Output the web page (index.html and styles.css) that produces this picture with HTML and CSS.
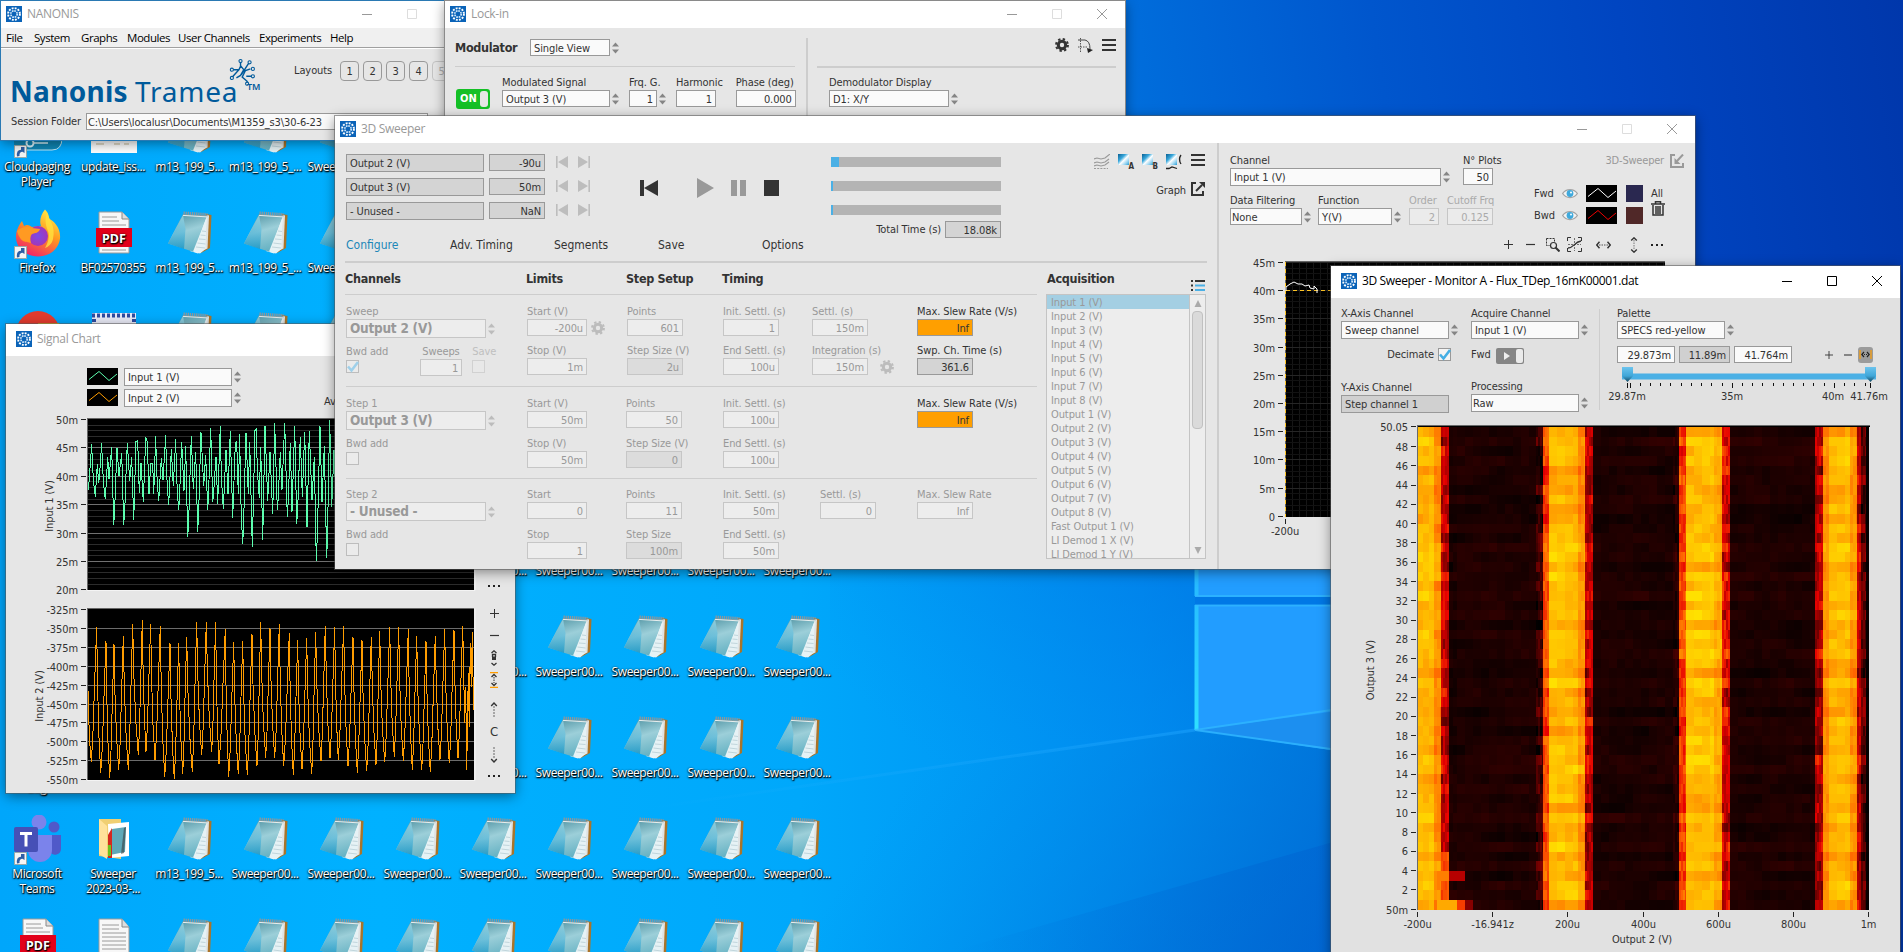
FILE: index.html
```html
<!DOCTYPE html>
<html lang="en">
<head>
<meta charset="utf-8">
<title>Nanonis desktop</title>
<link rel="stylesheet" href="styles.css">
</head>
<body>
<svg class="defs" aria-hidden="true">
  <defs>
    <linearGradient id="gPage" x1=".3" y1="0" x2=".6" y2="1"><stop offset="0" stop-color="#5597a6"/><stop offset=".45" stop-color="#9ccfd9"/><stop offset="1" stop-color="#62b0c2"/></linearGradient>
    <linearGradient id="gPageL" x1="0" y1="0" x2="0" y2="1"><stop offset="0" stop-color="#a5e0ee"/><stop offset="1" stop-color="#0d92c6"/></linearGradient>
    <linearGradient id="gFox" x1=".8" y1="0" x2=".3" y2="1"><stop offset="0" stop-color="#fff14a"/><stop offset=".45" stop-color="#ff9a1f"/><stop offset="1" stop-color="#f0206a"/></linearGradient>
    <radialGradient id="gGlobe"><stop offset="0" stop-color="#7a4be8"/><stop offset="1" stop-color="#a336b8"/></radialGradient>
    <linearGradient id="gMap" x1="0" y1="0" x2="1" y2="1"><stop offset="0" stop-color="#0a5f92"/><stop offset=".35" stop-color="#38a8dc"/><stop offset=".55" stop-color="#fff"/><stop offset=".8" stop-color="#8fd0ef"/><stop offset="1" stop-color="#2a9cd6"/></linearGradient>
    <linearGradient id="gKnob" x1="0" y1="0" x2="0" y2="1"><stop offset="0" stop-color="#6cc4ee"/><stop offset=".6" stop-color="#3fa6d8"/><stop offset="1" stop-color="#16485f"/></linearGradient>
  </defs>
  <symbol id="app" viewBox="0 0 16 16"><rect width="16" height="16" fill="#0a63b8"/><circle cx="8" cy="8" r="5.9" fill="none" stroke="#fff" stroke-width="1.9" stroke-dasharray="1.9 1.19"/><circle cx="8" cy="8" r="3.2" fill="none" stroke="#cfe6fa" stroke-width="1.7" stroke-dasharray="1.7 .8"/></symbol>
  <symbol id="min" viewBox="0 0 10 10"><path d="M0 5.5h10" stroke="currentColor"/></symbol>
  <symbol id="max" viewBox="0 0 10 10"><path d="M.5.5h9v9h-9z" fill="none" stroke="currentColor"/></symbol>
  <symbol id="close" viewBox="0 0 10 10"><path d="M0 0l10 10M10 0L0 10" stroke="currentColor" fill="none"/></symbol>
  <symbol id="ud" viewBox="0 0 7 12"><path d="M0 4.6L3.5.4 7 4.6zM0 7.4L3.500 11.600 7 7.400z" fill="currentColor"/></symbol>
  <symbol id="gear" viewBox="0 0 14 14"><circle cx="7" cy="7" r="3.7" fill="none" stroke="currentColor" stroke-width="3"/><circle cx="7" cy="7" r="5.9" fill="none" stroke="currentColor" stroke-width="2.1" stroke-dasharray="2.35 2.283"/></symbol>
  <symbol id="burger" viewBox="0 0 14 14"><path d="M0 2h14M0 7h14M0 12h14" stroke="currentColor" stroke-width="2"/></symbol>
  <symbol id="skipb" viewBox="0 0 12 12"><path d="M0 0h1.600v12H0zM12 0v12L2 6z" fill="currentColor"/></symbol>
  <symbol id="skipf" viewBox="0 0 12 12"><path d="M12 0h-1.600v12H12zM0 0v12l10-6z" fill="currentColor"/></symbol>
  <symbol id="waves" viewBox="0 0 16 16"><path d="M0 5l3-1 4 1 4-1 5-4M0 9l3-1 4 1 4-1 4-3M0 12l3-1 4 1 4-1 4-3" fill="none" stroke="#9a9a9a" stroke-width="1.200"/><path d="M0 14.500h14" stroke="#9a9a9a" stroke-dasharray="2 1.200"/></symbol>
  <symbol id="mapicon" viewBox="0 0 11 11"><path d="M0 0h11v11H0z" fill="url(#gMap)"/></symbol>
  <symbol id="popout" viewBox="0 0 14 14"><path d="M5 1H1v12h11V9" fill="none" stroke="currentColor" stroke-width="2"/><path d="M5 9l6-6" stroke="currentColor" stroke-width="2"/><path d="M8 0h6v6z" fill="currentColor"/></symbol>
  <symbol id="popin" viewBox="0 0 14 14"><path d="M5 1H1v12h12V9" fill="none" stroke="currentColor" stroke-width="2"/><path d="M13 .5L7 7" stroke="currentColor" stroke-width="2"/><path d="M4.500 10V4l6 6z" fill="currentColor"/></symbol>
  <symbol id="listicon" viewBox="0 0 14 11"><path d="M0 1h2M0 5.500h2M0 10h2M4 1h10" stroke="#333" stroke-width="2"/><path d="M4 5.500h10M4 10h10" stroke="#4bb0e5" stroke-width="2"/></symbol>
  <symbol id="eye" viewBox="0 0 16 11"><path d="M.6 5.500C4 .2 12 .2 15.400 5.500 12 10.800 4 10.800.6 5.500z" fill="#f4f4f4" stroke="#a5a5a5" stroke-width="1.300"/><circle cx="8" cy="5.500" r="3.400" fill="#3fa9dc"/><circle cx="9" cy="4.500" r="1" fill="#fff"/></symbol>
  <symbol id="trash" viewBox="0 0 14 15"><path d="M0 3h14M4.500 2.500V.8h5v1.700M2 4v10h10V4M5 5v8M7 5v8M9 5v8" fill="none" stroke="#333" stroke-width="1.500"/></symbol>
  <symbol id="zoomsel" viewBox="0 0 14 14"><path d="M.5.5h8v3M.5.500v7h3" fill="none" stroke="#333" stroke-dasharray="2 1"/><circle cx="7.500" cy="7.500" r="3" fill="none" stroke="#333" stroke-width="1.200"/><path d="M9.500 9.500L13.500 13.500" stroke="#333" stroke-width="2"/></symbol>
  <symbol id="fit" viewBox="0 0 15 15"><path d="M.5 4V.5H4M11 .5h3.500V4M.5 11v3.500H4M11 14.500h3.500V11" fill="none" stroke="#333"/><path d="M7.500 1v13M1 7.500h13" stroke="#555" stroke-width=".8" stroke-dasharray="2 1"/><path d="M1 11c6 0 6-6 13-7" fill="none" stroke="#333" stroke-width="1.300"/></symbol>
  <symbol id="harr" viewBox="0 0 15 8"><path d="M3.500.8L.8 4l2.700 3.200M11.500.8L14.200 4l-2.700 3.200" fill="none" stroke="#333" stroke-width="1.400"/><path d="M3 4h9" stroke="#555" stroke-dasharray="1.500 1"/></symbol>
  <symbol id="varr" viewBox="0 0 8 16"><path d="M1.200 3.500L4 .8l2.800 2.700M1.200 12.500L4 15.200l2.800-2.700" fill="none" stroke="#333" stroke-width="1.400"/><path d="M4 3v10" stroke="#777" stroke-dasharray="1.500 1"/></symbol>
  <symbol id="plus" viewBox="0 0 9 9"><path d="M0 4.500h9M4.500 0v9" stroke="#333"/></symbol>
  <symbol id="minus" viewBox="0 0 9 9"><path d="M0 4.500h9" stroke="#333" stroke-width="1.200"/></symbol>
  <symbol id="dots" viewBox="0 0 12 2"><path d="M0 1h2M5 1h2M10 1h2" stroke="#222" stroke-width="2"/></symbol>
  <symbol id="tracepic" viewBox="0 0 31 17"><path d="M0 0h31v17H0z" fill="#000"/><path d="M2 11.500L12 3.500l10 9 8-6.500" fill="none" stroke="currentColor"/></symbol>
  <symbol id="tick" viewBox="0 0 13 13"><path d="M2 6.500l3.500 4L12 2" fill="none" stroke="currentColor" stroke-width="2.600"/></symbol>
  <symbol id="vup" viewBox="0 0 8 16"><path d="M1.200 4L4 1l2.800 3" fill="none" stroke="#333" stroke-width="1.400"/><path d="M4 4v12" stroke="#666" stroke-dasharray="2 1"/></symbol>
  <symbol id="vdown" viewBox="0 0 8 16"><path d="M1.200 12L4 15l2.800-3" fill="none" stroke="#333" stroke-width="1.400"/><path d="M4 0v12" stroke="#666" stroke-dasharray="2 1"/></symbol>
  <symbol id="vlock" viewBox="0 0 8 16"><path d="M1.500 3L4 .8 6.500 3M1.500 13L4 15.200 6.500 13M2.500 7V4.500h3V7" fill="none" stroke="#333" stroke-width="1.300"/><path d="M2 6.500h4v3.500H2z" fill="#333"/></symbol>
  <symbol id="vfit" viewBox="0 0 8 16"><path d="M0 .6h8M0 15.400h8" stroke="#ff9d00" stroke-width="1.300"/><path d="M1.500 5L4 2.500 6.500 5M1.500 11L4 13.500 6.500 11" fill="none" stroke="#333" stroke-width="1.300"/><path d="M4 5v6" stroke="#333" stroke-dasharray="1.500 1"/></symbol>

  <symbol id="notepad" viewBox="0 0 48 48">
    <path d="M40 5l5.500 1-1.500 33-9 5z" fill="#a9742a"/>
    <path d="M41 6l2 .5-1.500 33-9.500 4z" fill="#dfe3e4"/>
    <path d="M41 6L24 42l8 2.500 6-4z" fill="#eef6f8"/>
    <path d="M17 5l24 1.500L28 43 2 34.500z" fill="url(#gPage)"/>
    <path d="M17 6L2 34.500l16 5.500 1.500-20z" fill="url(#gPageL)" opacity=".7"/>
    <path d="M40.500 9L27 42.500l7 2 5.500-4.500z" fill="#e6f2f5"/>
    <path d="M36 22l4 .5M34.500 26l5 .5M33 30l6.500 .5M31.500 34l8 1M30 38l9 1" stroke="#b6cdd4" stroke-width=".8"/>
    <path d="M17.500 4.200l24 1.500" stroke="#8f9799" stroke-width="3.400" stroke-dasharray="1.300 .8"/>
    <path d="M17 6.400l24 1.500" stroke="#e9eeee" stroke-width="1"/>
  </symbol>
  <symbol id="shortcut" viewBox="0 0 13 13"><path d="M.5.5h12v12H.5z" fill="#f5f5f5" stroke="#9aa"/><path d="M3 11.500Q2 5 7 4.800V2h3.500v6L8.500 6.800Q5 7 5.500 11z" fill="#2e5fa5"/></symbol>
  <symbol id="firefox" viewBox="0 0 48 48">
    <path d="M31 .5c3 3 4 6 4 9 5 3 12 9 11 20-1 10-10 18-22 18S2 39 2 28c0-7 3-12 6-16l2 5c3-2 5-1 8 1l9-1c-2-5 0-12 4-16.500z" fill="url(#gFox)"/>
    <circle cx="24" cy="27" r="10" fill="url(#gGlobe)"/>
    <path d="M3 22c4-4 10-5 15-3l8 1c-1 4-5 4-8 5-2 2-2 6-1 9-5-2-10 1-14-12z" fill="#ff9a22"/>
    <path d="M33 3c2 8 9 14 6 27-1 5-5 8-8 9 3-5 5-12 3-17-3-7-3-13-1-19z" fill="#ffe23e" opacity=".8"/>
  </symbol>
  <symbol id="pdf" viewBox="0 0 48 48">
    <path d="M9 3h23l7 7v34H9z" fill="#f7f7f7" stroke="#9a9a9a"/><path d="M32 3v7h7" fill="#ddd" stroke="#888"/>
    <path d="M12 8h15M12 12h17M12 16h24M12 41h24" stroke="#9a9a9a"/><path d="M6 19h36v19H6z" fill="#e2001a"/>
    <text x="24" y="33.500" class="pdftext">PDF</text>
  </symbol>
  <symbol id="doc" viewBox="0 0 48 48"><path d="M9 3h23l7 8v37H9z" fill="#f7f7f7" stroke="#9a9a9a"/><path d="M32 3v8h7" fill="#ddd" stroke="#888"/><path d="M12 9h17M12 13h17M12 17h24M12 21h24M12 25h24M12 29h24M12 33h24M12 37h24M12 41h24" stroke="#9a9a9a"/></symbol>
  <symbol id="teams" viewBox="0 0 48 48">
    <circle cx="40" cy="12" r="5.500" fill="#5059c9"/><circle cx="25" cy="7" r="7.500" fill="#7b83eb"/>
    <path d="M36 20h11v14a6 6 0 0 1-11 3z" fill="#5059c9"/><path d="M14 20h24v15a12 12 0 0 1-24 0z" fill="#7b83eb"/>
    <rect x="0" y="12" width="24" height="25" rx="2" fill="#4650b6"/><path d="M6 18.500h12M12 18.500v13" stroke="#fff" stroke-width="3"/>
  </symbol>
  <symbol id="folder" viewBox="0 0 48 48">
    <path d="M9 4l22 0v40l-22-3z" fill="#f0cf72"/><path d="M18 9l21-2v34l-20 2z" fill="#fff"/><path d="M22 14l14-2-1 25-15 3z" fill="#5fa9b8"/><path d="M34 13l2-1-2 26-3 1z" fill="#333" opacity=".55"/><path d="M18 20l4-7v30h-4z" fill="#d5281e"/><path d="M18 30h3v11h-3z" fill="#6cc21e"/>
    <path d="M9 4l8 7v33l-8-5z" fill="#ffe29a"/>
  </symbol>
  <symbol id="chrome" viewBox="0 0 48 48"><circle cx="24" cy="23" r="22" fill="#e33b2e"/><circle cx="24" cy="24" r="9" fill="#fff"/><path d="M24 13h21a22 22 0 0 1-20 32z" fill="#fbc116"/></symbol>
  <symbol id="cal" viewBox="0 0 48 48"><path d="M2 3h44v42H2z" fill="#e9eaf6"/><path d="M2 5.500h44" stroke="#2f4ba0" stroke-width="4" stroke-dasharray="3 2"/><path d="M4 9v36M44 9v36" stroke="#2f4ba0" stroke-width="4" stroke-dasharray="3 2"/></symbol>
  <symbol id="sheet" viewBox="0 0 48 48"><path d="M1 2h46v43H1z" fill="#fff"/><path d="M6 31h8M6 36h8M24 31h6M24 36h6M34 31h5M34 36h5" stroke="#ded9c8" stroke-width="2"/></symbol>
  <symbol id="cloud" viewBox="0 0 48 48"><path d="M-2 20h50v10q0 12-10 12H-2z" fill="#0f86b4" stroke="#bfe8f6"/><circle cx="16" cy="35" r="3.500" fill="none" stroke="#d8f2fb" stroke-width="2"/><path d="M20 35h14" stroke="#d8f2fb" stroke-width="1.500"/></symbol>
</svg>

<div class="desktop">
  <svg class="wallpaper" viewBox="0 0 1903 952" preserveAspectRatio="none">
    <defs>
      <linearGradient id="wBase" x1="0" y1="0" x2="1903" y2="0" gradientUnits="userSpaceOnUse">
        <stop offset="0" stop-color="#00a6fb"/><stop offset=".2" stop-color="#00b1ff"/><stop offset=".42" stop-color="#00a8fb"/><stop offset=".6" stop-color="#008df0"/><stop offset=".7" stop-color="#0078de"/><stop offset=".86" stop-color="#0048c4"/><stop offset="1" stop-color="#0039ae"/>
      </linearGradient>
      <linearGradient id="wTop" x1="1100" y1="120" x2="1903" y2="0" gradientUnits="userSpaceOnUse">
        <stop offset="0" stop-color="#0071de"/><stop offset=".35" stop-color="#0056cd"/><stop offset=".65" stop-color="#0045c1"/><stop offset="1" stop-color="#0037ab"/>
      </linearGradient>
      <linearGradient id="wFloor" x1="960" y1="700" x2="1360" y2="960" gradientUnits="userSpaceOnUse"><stop offset="0" stop-color="#0090e8" stop-opacity="0"/><stop offset="1" stop-color="#0068d4"/></linearGradient>
      <linearGradient id="wBeam" x1="650" y1="0" x2="1195" y2="0" gradientUnits="userSpaceOnUse"><stop offset="0" stop-color="#2bb4ff" stop-opacity="0"/><stop offset="1" stop-color="#1ea4ff" stop-opacity=".5"/></linearGradient>
      <linearGradient id="wRay" x1="960" y1="0" x2="1340" y2="0" gradientUnits="userSpaceOnUse"><stop offset="0" stop-color="#0060cf" stop-opacity="0"/><stop offset="1" stop-color="#0060cf" stop-opacity=".45"/></linearGradient>
      <linearGradient id="wShade" x1="950" y1="780" x2="1150" y2="560" gradientUnits="userSpaceOnUse"><stop offset="0" stop-color="#0090f0" stop-opacity="0"/><stop offset="1" stop-color="#007ce8" stop-opacity=".6"/></linearGradient>
      <linearGradient id="wEdge" x1="0" y1="560" x2="0" y2="730" gradientUnits="userSpaceOnUse"><stop offset="0" stop-color="#25b4ff"/><stop offset="1" stop-color="#2fe0ff"/></linearGradient>
    </defs>
    <path d="M0 0h1903v952H0z" fill="url(#wBase)"/>
    <path d="M1100 0h803v400h-803z" fill="url(#wTop)"/>
    <path d="M830 560h365v170L830 780z" fill="url(#wShade)"/>
    <path d="M700 800L1195 730 1340 752V952H700z" fill="url(#wFloor)"/>
    <path d="M950 952L1340 840v112z" fill="url(#wRay)"/>
    <path d="M650 808L1195 730" stroke="url(#wBeam)" stroke-width="3"/>
    <path d="M1195 540h150v57h-150zM1195 605h150v147L1195 730z" fill="#229dff"/>
    <path d="M1195 597h150v8h-150z" fill="#0078e6"/>
    <path d="M1195 730l150-20v42z" fill="#1c8ff0"/>
    <path d="M1196.500 540v56M1196.500 605v125" stroke="url(#wEdge)" stroke-width="4"/>
    <path d="M1195 596h150M1195 605.500h150M1195 730l150 21M1195 730l150-22" stroke="#2fb6ff" stroke-width="2" fill="none" opacity=".8"/>
  </svg>
  <div class="icons" id="icons"></div>

  <section class="win nanonis">
    <header class="bar"><svg class="i16"><use href="#app"/></svg><span class="title">NANONIS</span><svg class="wb b1"><use href="#min"/></svg><svg class="wb faint"><use href="#max"/></svg></header>
    <nav class="menu"><span>File</span><span>System</span><span>Graphs</span><span>Modules</span><span>User Channels</span><span>Experiments</span><span>Help</span></nav>
    <div class="nbody">
      <div class="nrow">
        <div class="logo"><b>Nanonis</b><span>Tramea</span>
          <svg class="branch" viewBox="0 0 32 34"><g fill="none" stroke="#005a9b" stroke-width="1.700"><path d="M13 2v6l4 5-4 7-5 3M23 5l-9 14M25 12l-6 2-4 8 6 5v5M27 21h-7M2 13h9l2-4M11 13l-9 10"/></g><g fill="#e6e6e6" stroke="#005a9b" stroke-width="1.300"><circle cx="13" cy="2.500" r="1.900"/><circle cx="24" cy="4" r="1.900"/><circle cx="28" cy="12" r="1.900"/><circle cx="28" cy="21" r="1.900"/><circle cx="21" cy="30" r="1.900"/><circle cx="2.500" cy="13" r="1.900"/><circle cx="2.500" cy="23" r="1.900"/></g></svg>
          <sup>TM</sup></div>
        <div class="layouts"><span>Layouts</span><i>1</i><i>2</i><i>3</i><i>4</i><i class="off">5</i></div>
      </div>
      <div class="session"><span>Session Folder</span><div class="box path">C:\Users\localusr\Documents\M1359_s3\30-6-23</div></div>
    </div>
  </section>

  <section class="win lockin">
    <header class="bar"><svg class="i16"><use href="#app"/></svg><span class="title">Lock-in</span><svg class="wb b1"><use href="#min"/></svg><svg class="wb faint"><use href="#max"/></svg><svg class="wb"><use href="#close"/></svg></header>
    <div class="lbody">
      <div class="lleft">
        <div class="lhead"><b class="h">Modulator</b><div class="sel"><div class="box w80">Single View</div><svg><use href="#ud"/></svg></div></div>
        <div class="lfields">
          <div class="toggle">ON<i></i></div>
          <div class="fld"><label>Modulated Signal</label><div class="sel"><div class="box w108">Output 3 (V)</div><svg><use href="#ud"/></svg></div></div>
          <div class="fld"><label>Frq. G.</label><div class="sel"><div class="box num w28">1</div><svg><use href="#ud"/></svg></div></div>
          <div class="fld"><label>Harmonic</label><div class="box num w40">1</div></div>
          <div class="fld"><label>Phase (deg)</label><div class="box num w60">0.000</div></div>
        </div>
      </div>
      <div class="lright">
        <div class="ltools"><svg class="i14"><use href="#gear"/></svg><svg class="i15" viewBox="0 0 15 15"><path d="M2.500 0v15M0 9h10" stroke="#555" stroke-dasharray="1.500 1" fill="none"/><path d="M0 2h7q5 1 5 9" stroke="#444" fill="none"/><path d="M9 10l6 2-5 3z" fill="#222"/></svg><svg class="i14"><use href="#burger"/></svg></div>
        <div class="fld demod"><label>Demodulator Display</label><div class="sel"><div class="box w120">D1: X/Y</div><svg><use href="#ud"/></svg></div></div>
      </div>
    </div>
  </section>

  <section class="win chartwin">
    <header class="bar tall"><svg class="i16"><use href="#app"/></svg><span class="title">Signal Chart</span></header>
    <div class="cbody">
      <div class="crow"><svg class="tr green"><use href="#tracepic"/></svg><div class="sel"><div class="box b18 w108">Input 1 (V)</div><svg><use href="#ud"/></svg></div></div>
      <div class="crow"><svg class="tr amber"><use href="#tracepic"/></svg><div class="sel"><div class="box b18 w108">Input 2 (V)</div><svg><use href="#ud"/></svg></div><span class="av">Average</span></div>
      <div class="cplots"><svg id="chart" width="476" height="383"></svg>
        <div class="vtools"><svg class="dots"><use href="#dots"/></svg><svg class="p9 t1"><use href="#plus"/></svg><svg class="p9 t2"><use href="#minus"/></svg><svg class="v8"><use href="#vlock"/></svg><svg class="v8"><use href="#vfit"/></svg><svg class="v8 t3"><use href="#vup"/></svg><b>C</b><svg class="v8"><use href="#vdown"/></svg><svg class="dots t4"><use href="#dots"/></svg></div>
      </div>
    </div>
  </section>

  <section class="win sweeper">
    <header class="bar"><svg class="i16"><use href="#app"/></svg><span class="title">3D Sweeper</span><svg class="wb b1"><use href="#min"/></svg><svg class="wb faint"><use href="#max"/></svg><svg class="wb"><use href="#close"/></svg></header>
    <div class="sbody">
      <div class="sleft">
        <div class="stop">
          <div class="status">
            <div><div class="box ro b18 w138">Output 2 (V)</div><div class="box ro num w56">-90u</div><svg><use href="#skipb"/></svg><svg><use href="#skipf"/></svg></div>
            <div><div class="box ro b18 w138">Output 3 (V)</div><div class="box ro num w56">50m</div><svg><use href="#skipb"/></svg><svg><use href="#skipf"/></svg></div>
            <div><div class="box ro b18 w138">- Unused -</div><div class="box ro num w56">NaN</div><svg><use href="#skipb"/></svg><svg><use href="#skipf"/></svg></div>
          </div>
          <svg class="transport" width="140" height="20" viewBox="0 0 140 20"><path d="M0 2h4v16H0zM18 2v16L4 10zM124 2h15v16h-15z" fill="#333"/><path d="M57 0l17 10-17 10zM91 2h6v16h-6zM100 2h6v16h-6z" fill="#999"/></svg>
          <div class="progress"><div><i class="p8"></i></div><div><i></i></div><div><i></i></div><p><span>Total Time (s)</span><span class="box ro num w56">18.08k</span></p></div>
          <div class="stools">
            <div><svg class="i16"><use href="#waves"/></svg><span class="mi"><svg><use href="#mapicon"/></svg><em>A</em></span><span class="mi"><svg><use href="#mapicon"/></svg><em>B</em></span><span class="mi"><svg><use href="#mapicon"/></svg><svg class="side" viewBox="0 0 16 16"><path d="M15 1q-3 4 0 9M0 14.500h3l3-1.500 5 1.500" fill="none" stroke="#222" stroke-width="1.300"/></svg></span><svg class="i14 bg"><use href="#burger"/></svg></div>
            <div class="graph"><span>Graph</span><svg class="i14"><use href="#popout"/></svg></div>
          </div>
        </div>
        <div class="tabs"><span class="on">Configure</span><span>Adv. Timing</span><span>Segments</span><span>Save</span><span>Options</span></div>
        <div class="cfg">
          <div class="params">
            <div class="g heads"><b class="h">Channels</b><b class="h">Limits</b><b class="h">Step Setup</b><b class="h">Timing</b></div>
            <div class="g first">
              <div class="fld"><label>Sweep</label><div class="sel"><div class="box big w140">Output 2 (V)</div><svg><use href="#ud"/></svg></div></div>
              <div class="fld"><label>Start (V)</label><div class="inl"><div class="box num w60">-200u</div><svg class="i14"><use href="#gear"/></svg></div></div>
              <div class="fld"><label>Points</label><div class="box num w56">601</div></div>
              <div class="fld"><label>Init. Settl. (s)</label><div class="box num w56">1</div></div>
              <div class="fld"><label>Settl. (s)</label><div class="box num w56">150m</div></div>
              <div class="fld live"><label>Max. Slew Rate (V/s)</label><div class="box num or w56">Inf</div></div>
            </div>
            <div class="g second a">
              <div class="bwd"><div class="fld"><label>Bwd add</label><div class="chk"><svg><use href="#tick"/></svg></div></div><div class="fld sw"><label>Sweeps</label><div class="box num w42">1</div></div><div class="fld sv"><label>Save</label><div class="chk"></div></div></div>
              <div class="fld"><label>Stop (V)</label><div class="box num w60">1m</div></div>
              <div class="fld"><label>Step Size (V)</label><div class="box num ro w56">2u</div></div>
              <div class="fld"><label>End Settl. (s)</label><div class="box num w56">100u</div></div>
              <div class="fld"><label>Integration (s)</label><div class="inl far"><div class="box num w56">150m</div><svg class="i14"><use href="#gear"/></svg></div></div>
              <div class="fld live"><label>Swp. Ch. Time (s)</label><div class="box num ro w56">361.6</div></div>
            </div>
            <div class="g first s">
              <div class="fld"><label>Step 1</label><div class="sel"><div class="box big w140">Output 3 (V)</div><svg><use href="#ud"/></svg></div></div>
              <div class="fld"><label>Start (V)</label><div class="box num w60">50m</div></div>
              <div class="fld"><label>Points</label><div class="box num w56">50</div></div>
              <div class="fld"><label>Init. Settl. (s)</label><div class="box num w56">100u</div></div>
              <div></div>
              <div class="fld live"><label>Max. Slew Rate (V/s)</label><div class="box num or w56">Inf</div></div>
            </div>
            <div class="g second s">
              <div class="fld"><label>Bwd add</label><div class="chk"></div></div>
              <div class="fld"><label>Stop (V)</label><div class="box num w60">50m</div></div>
              <div class="fld"><label>Step Size (V)</label><div class="box num ro w56">0</div></div>
              <div class="fld"><label>End Settl. (s)</label><div class="box num w56">100u</div></div>
            </div>
            <div class="g first s z">
              <div class="fld"><label>Step 2</label><div class="sel"><div class="box big w140">- Unused -</div><svg><use href="#ud"/></svg></div></div>
              <div class="fld"><label>Start</label><div class="box num w60">0</div></div>
              <div class="fld"><label>Points</label><div class="box num w56">11</div></div>
              <div class="fld"><label>Init. Settl. (s)</label><div class="box num w56">50m</div></div>
              <div class="fld ind"><label>Settl. (s)</label><div class="box num w56">0</div></div>
              <div class="fld"><label>Max. Slew Rate</label><div class="box num w56">Inf</div></div>
            </div>
            <div class="g second s z">
              <div class="fld"><label>Bwd add</label><div class="chk"></div></div>
              <div class="fld"><label>Stop</label><div class="box num w60">1</div></div>
              <div class="fld"><label>Step Size</label><div class="box num ro w56">100m</div></div>
              <div class="fld"><label>End Settl. (s)</label><div class="box num w56">50m</div></div>
            </div>
          </div>
          <div class="acq">
            <div class="acqh"><b class="h">Acquisition</b><svg><use href="#listicon"/></svg></div>
            <div class="list">
              <ul><li class="on">Input 1 (V)</li><li>Input 2 (V)</li><li>Input 3 (V)</li><li>Input 4 (V)</li><li>Input 5 (V)</li><li>Input 6 (V)</li><li>Input 7 (V)</li><li>Input 8 (V)</li><li>Output 1 (V)</li><li>Output 2 (V)</li><li>Output 3 (V)</li><li>Output 4 (V)</li><li>Output 5 (V)</li><li>Output 6 (V)</li><li>Output 7 (V)</li><li>Output 8 (V)</li><li>Fast Output 1 (V)</li><li>LI Demod 1 X (V)</li><li>LI Demod 1 Y (V)</li></ul>
              <div class="sb"><svg viewBox="0 0 8 8"><path d="M4 0l4 8H0z" fill="#aaa"/></svg><i></i><svg class="dn" viewBox="0 0 8 8"><path d="M4 8l4-8H0z" fill="#aaa"/></svg></div>
            </div>
          </div>
        </div>
      </div>
      <div class="sright">
        <div class="rtop">
          <div class="rl">
            <div class="rr"><div class="fld"><label>Channel</label><div class="sel"><div class="box b18 w211">Input 1 (V)</div><svg><use href="#ud"/></svg></div></div><div class="fld g13"><label>N° Plots</label><div class="box num w30">50</div></div></div>
            <div class="rr r2"><div class="fld"><label>Data Filtering</label><div class="sel"><div class="box tight w72">None</div><svg><use href="#ud"/></svg></div></div><div class="fld g7"><label>Function</label><div class="sel"><div class="box w74">Y(V)</div><svg><use href="#ud"/></svg></div></div><div class="fld g8 dis"><label>Order</label><div class="box num w30">2</div></div><div class="fld g8 dis"><label>Cutoff Frq</label><div class="box num w46">0.125</div></div></div>
          </div>
          <div class="rh">
            <div class="back"><span>3D-Sweeper</span><svg class="i14"><use href="#popin"/></svg></div>
            <div class="vis">
              <div class="vr"><span>Fwd</span><svg class="eye"><use href="#eye"/></svg><svg class="tr white"><use href="#tracepic"/></svg><i class="navy"></i></div>
              <div class="vr"><span>Bwd</span><svg class="eye"><use href="#eye"/></svg><svg class="tr red"><use href="#tracepic"/></svg><i class="brown"></i></div>
              <div class="all"><span>All</span><svg><use href="#trash"/></svg></div>
            </div>
          </div>
        </div>
        <div class="rtools"><svg class="p9"><use href="#plus"/></svg><svg class="p9"><use href="#minus"/></svg><svg class="i14 m11"><use href="#zoomsel"/></svg><svg class="i15 m6"><use href="#fit"/></svg><svg class="hx m14"><use href="#harr"/></svg><svg class="v8 m19"><use href="#varr"/></svg><svg class="dots m13"><use href="#dots"/></svg></div>
        <svg id="linegraph" width="474" height="315"></svg>
      </div>
    </div>
  </section>

  <section class="win monitor">
    <header class="bar tall"><svg class="i16"><use href="#app"/></svg><span class="title">3D Sweeper - Monitor A - Flux_TDep_16mK00001.dat</span><svg class="wb b1"><use href="#min"/></svg><svg class="wb"><use href="#max"/></svg><svg class="wb"><use href="#close"/></svg></header>
    <div class="mtop">
      <div class="mc">
        <div class="fld"><label>X-Axis Channel</label><div class="sel"><div class="box b18 w108">Sweep channel</div><svg><use href="#ud"/></svg></div></div>
        <div class="dec"><span>Decimate</span><div class="chk"><svg><use href="#tick"/></svg></div></div>
        <div class="fld"><label>Y-Axis Channel</label><div class="box ro b18 w108">Step channel 1</div></div>
      </div>
      <div class="mc">
        <div class="fld"><label>Acquire Channel</label><div class="sel"><div class="box b18 w108">Input 1 (V)</div><svg><use href="#ud"/></svg></div></div>
        <div class="dec fw"><span>Fwd</span><div class="ftog"><svg viewBox="0 0 6 8"><path d="M0 0l6 4-6 4z" fill="#eee"/></svg><i></i></div></div>
        <div class="fld"><label>Processing</label><div class="sel"><div class="box b18 tight w108">Raw</div><svg><use href="#ud"/></svg></div></div>
      </div>
      <div class="mc pal">
        <div class="fld"><label>Palette</label><div class="sel"><div class="box b18 w108">SPECS red-yellow</div><svg><use href="#ud"/></svg></div></div>
        <div class="vals"><div class="box num w58">29.873m</div><div class="box num ro w51">11.89m</div><div class="box num w58">41.764m</div><svg class="p7 m33"><use href="#plus"/></svg><svg class="p7 m11"><use href="#minus"/></svg><span class="rng"><svg class="hx" viewBox="0 0 15 15"><path d="M2 3v9M13 3v9" stroke="#ff9d00" stroke-width="1.200"/><path d="M6 5L3.800 7.500 6 10M9 5l2.200 2.500L9 10" fill="none" stroke="#222" stroke-width="1.200"/><path d="M6 7.500h3" stroke="#222" stroke-dasharray="1 1"/></svg></span></div>
        <svg id="slider" width="292" height="38"></svg>
      </div>
    </div>
    <svg id="heat" width="567" height="542"></svg>
  </section>
</div>
<script src="app.js"></script>
</body>
</html>
```
FILE: styles.css
```css
* { box-sizing: border-box; }
html, body { margin: 0; padding: 0; }
body { width: 1903px; height: 952px; overflow: hidden; font: 11px/14px "DejaVu Sans Condensed", "DejaVu Sans", sans-serif; font-stretch: condensed; color: #333; letter-spacing: -.1px; }
svg { display: block; flex: none; overflow: visible; }
.defs { position: absolute; width: 0; height: 0; overflow: hidden; }
.desktop { position: relative; width: 1903px; height: 952px; overflow: hidden; background: #00a8fb; }
.wallpaper { position: absolute; left: 0; top: 0; width: 1903px; height: 952px; }

/* desktop shortcuts */
.icons { position: absolute; left: -1px; top: 6px; display: grid; grid-template-columns: repeat(11, 76px); grid-auto-rows: 101px; }
.ico { display: flex; flex-direction: column; align-items: center; padding-top: 1px; color: #fff; font: 12px/15px "Open Sans", "Noto Sans", sans-serif; letter-spacing: -.38px; text-align: center; white-space: pre; text-shadow: 1px 1px 1px #000, 0 1px 2px #000, 0 0 2px rgba(0,0,0,.6); }
.ico svg { width: 48px; height: 48px; margin-bottom: 1px; }
.ico .pic { display: grid; width: 48px; height: 51px; margin-left: 2px; }
.ico .pic svg { grid-area: 1 / 1; }
.ico .pic .cut { width: 13px; height: 13px; align-self: end; margin-bottom: 1px; margin-left: 0; }

/* windows */
.win { position: absolute; display: flex; flex-direction: column; background: #e6e6e6; box-shadow: 0 0 0 1px rgba(90,90,90,.55), 0 3px 12px rgba(0,0,0,.45); }
.bar { display: flex; align-items: center; height: 27px; background: #fff; flex: none; color: #999; padding-left: 5px; padding-bottom: 1px; }
.bar.tall { height: 32px; padding-left: 10px; padding-bottom: 2px; }
.title { font: 12px/16px "Open Sans", "Noto Sans", sans-serif; letter-spacing: -.3px; margin-left: 5px; white-space: nowrap; }
.wb { width: 10px; height: 10px; margin-left: 35px; }
.wb.b1 { margin-left: auto; }
.faint { color: #ddd; }
.i16 { width: 16px; height: 16px; }
.i15 { width: 15px; height: 15px; }
.i14 { width: 14px; height: 14px; }
.h { font: bold 12.5px/16px "DejaVu Sans Condensed", "DejaVu Sans", sans-serif; font-stretch: condensed; letter-spacing: -.3px; white-space: nowrap; }

/* form pieces */
.box { height: 17px; line-height: 15px; padding: 1px 4px 0 3px; border: 1px solid #999; background: #fafafa; white-space: nowrap; overflow: hidden; display: block; flex: none; }
.box.b18 { height: 18px; line-height: 16px; }
.box.tight { padding-left: 1px; }
.box.num { text-align: right; padding-right: 3px; }
.box.ro { background: #d4d4d4; }
.box.or { background: #ff9f00; }
.box.big { height: 19px; font-size: 13.5px; font-weight: bold; line-height: 17px; padding-top: 0; letter-spacing: -.25px; }
.w28 { width: 28px; } .w30 { width: 30px; } .w40 { width: 40px; } .w42 { width: 42px; } .w46 { width: 46px; } .w51 { width: 51px; } .w56 { width: 56px; } .w58 { width: 58px; } .w60 { width: 60px; } .w72 { width: 72px; } .w74 { width: 74px; } .w80 { width: 80px; } .w108 { width: 108px; } .w120 { width: 120px; } .w138 { width: 138px; } .w140 { width: 140px; } .w211 { width: 211px; }
.sel { display: flex; align-items: center; gap: 2px; }
.sel > svg { width: 7px; height: 12px; color: #858585; }
.fld { display: flex; flex-direction: column; align-items: flex-start; }
.fld label { height: 15px; padding-top: 1px; white-space: nowrap; }
.chk { width: 13px; height: 13px; border: 1px solid #999; background: #f4f4f4; color: #45aee4; }
.chk svg { width: 13px; height: 13px; margin: -1px; }
.dots { width: 12px; height: 2px; }
.p9 { width: 9px; height: 9px; }
.p7 { width: 8px; height: 8px; }
.v8 { width: 8px; height: 16px; }
.hx { width: 15px; height: 8px; }
.tr { width: 31px; height: 17px; }
.green { color: #5dffb0; } .amber { color: #ff9d00; } .white { color: #fff; } .red { color: #f00000; }

/* main Nanonis window */
.nanonis { left: 1px; top: 1px; width: 500px; height: 139px; box-shadow: 0 0 0 1px #2a79b3, 0 3px 12px rgba(0,0,0,.45); }
.nanonis .bar { padding-right: 84px; }
.menu { display: flex; height: 20px; background: #f0f0f0; border-bottom: 1px solid #a0a0a0; color: #000; font: 11.500px/19px "Open Sans", "Noto Sans", sans-serif; letter-spacing: -.45px; padding-left: 5px; white-space: nowrap; }
.menu span:nth-child(1) { width: 28px; }
.menu span:nth-child(2) { width: 47px; }
.menu span:nth-child(3) { width: 46px; }
.menu span:nth-child(4) { width: 51px; }
.menu span:nth-child(5) { width: 81px; }
.menu span:nth-child(6) { width: 71px; }
.nbody { padding: 10px 0 0 9px; border-top: 1px solid #fff; }
.nrow { display: flex; height: 55px; }
.logo { display: flex; align-items: flex-end; width: 284px; color: #005a9b; font: 28px/38px "Noto Sans", sans-serif; height: 55px; padding-bottom: 4px; }
.logo b { width: 125px; letter-spacing: .3px; }
.logo span { width: 104px; letter-spacing: .8px; }
.logo .branch { width: 28px; height: 28px; margin: 0 0 23px -10px; }
.logo sup { font: 600 9px/10px "Noto Sans", sans-serif; margin: 0 0 18px -10px; }
.layouts { display: flex; gap: 4px; align-items: center; height: 22px; padding-top: 1px; }
.layouts span { margin-right: 3px; width: 39px; }
.layouts i { width: 19px; height: 20px; border: 1px solid #999; border-radius: 4px; font-style: normal; text-align: center; line-height: 20px; }
.layouts .off { color: #aaa; border-color: #c4c4c4; }
.session { display: flex; gap: 6px; line-height: 17px; margin-top: -1px; }
.session span { width: 70px; white-space: nowrap; margin-left: 1px; }
.path { width: 342px; margin-left: -1px; padding-left: 1px; font-size: 11px; }

/* lock-in window */
.lockin { left: 445px; top: 1px; width: 680px; height: 160px; box-shadow: 0 0 0 1px #8a8a8a, 0 -1px 0 0 #2a79b3, 0 3px 12px rgba(0,0,0,.45); }
.lockin .bar { padding-right: 18px; }
.lbody { display: flex; padding: 10px 9px 0 10px; height: 133px; }
.lleft { width: 353px; border-right: 2px solid #cdcdcd; padding-right: 11px; }
.lhead { display: flex; align-items: center; height: 29px; padding-bottom: 9px; gap: 11px; border-bottom: 1px solid #cdcdcd; }
.lhead .h { width: 64px; }
.lfields { display: flex; margin-top: 8px; }
.lfields .fld { margin-right: 10px; }
.lfields .fld:nth-child(4) { margin-right: 13px; }
.toggle { width: 34px; height: 20px; background: #14c026; border: 2px solid #14c026; border-radius: 3px; color: #fff; font-weight: bold; line-height: 16px; padding-left: 2px; margin: 14px 12px 0 1px; display: flex; justify-content: space-between; flex: none; letter-spacing: 0; }
.toggle i { width: 8px; background: #e6e6e6; border-radius: 3px; flex: none; }
.lfields .toggle { margin-right: 12px; }
.lright { flex: 1; padding-left: 9px; }
.ltools { display: flex; justify-content: flex-end; gap: 9px; height: 30px; border-bottom: 2px solid #cdcdcd; }
.ltools .i14 { color: #333; }
.demod { margin: 7px 0 0 12px; }

/* signal chart window */
.chartwin { left: 6px; top: 324px; width: 509px; height: 469px; }
.cbody { padding-top: 12px; }
.crow { display: flex; gap: 6px; height: 18px; margin: 0 0 3px 81px; }
.av { margin-left: 77px; padding-top: 6px; height: 12px; }
.cplots { display: flex; height: 383px; }
.vtools { display: flex; flex-direction: column; align-items: center; width: 24px; padding-top: 175px; }
.vtools b { font: 13px/14px "DejaVu Sans Condensed", sans-serif; margin: 7px 0 8px; }
.vtools .t1 { margin-top: 22px; } .vtools .t2 { margin: 13px 0 10px; } .vtools .v8 + .v8 { margin-top: 6px; } .vtools .t3.v8 { margin-top: 14px; } .vtools .t4 { margin-top: 12px; }

/* 3D sweeper window */
.sweeper { left: 335px; top: 116px; width: 1360px; height: 453px; }
.sweeper > .bar { padding-right: 18px; }
.sbody { display: flex; flex: 1; min-height: 0; }
.sleft { width: 884px; border-right: 2px solid #cdcdcd; padding: 11px 10px 0 11px; }
.stop { display: flex; height: 84px; }
.status { display: flex; flex-direction: column; gap: 6px; }
.status > div { display: flex; gap: 5px; height: 18px; width: 244px; }
.status svg { width: 12px; height: 12px; color: #bdbdbd; margin: 2px 0 0 6px; }
.status svg + svg { margin-left: 5px; }
.transport { margin: 24px 0 0 50px; }
.progress { margin: 3px 0 0 51px; width: 170px; }
.progress > div { height: 10px; margin-bottom: 14px; background: #b4b4b4; }
.progress i { display: block; width: 2px; height: 10px; background: #4bb0e5; }
.progress .p8 { width: 8px; }
.progress p { display: flex; justify-content: flex-end; gap: 4px; margin: -8px 0 0; line-height: 17px; white-space: nowrap; }
.progress p .box { line-height: 15px; }
.stools { margin-left: 93px; }
.stools > div { display: flex; gap: 8px; height: 28px; }
.mi { display: grid; width: 16px; height: 16px; }
.mi svg { grid-area: 1 / 1; width: 11px; height: 11px; }
.mi .side { width: 16px; height: 16px; }
.mi em { grid-area: 1 / 1; align-self: end; justify-self: end; font: bold 8px/7px "DejaVu Sans Condensed", sans-serif; }
.bg { margin: -1px 0 0 1px; }
.stools .graph { justify-content: flex-end; gap: 5px; line-height: 17px; width: 111px; }
.tabs { display: grid; grid-template-columns: repeat(5, 104px); height: 25px; font-size: 12px; line-height: 14px; border-bottom: 2px solid #cdcdcd; white-space: nowrap; margin-left: -1px; padding-left: 1px; letter-spacing: 0; }
.tabs .on { color: #2086b8; }
.cfg { display: flex; gap: 9px; margin-left: -1px; }
.params { width: 692px; padding-left: 1px; color: #999; }
.g { display: grid; grid-template-columns: 181px 100px 96px 89px 105px 1fr; }
.g.s { grid-template-columns: 181px 99px 97px 89px 105px 1fr; }
.heads { height: 32px; padding-top: 8px; color: #333; border-bottom: 1px solid #cdcdcd; margin-left: -1px; }
.params .box { border-color: #c6c6c6; background: #ededed; }
.params .box.ro { background: #dcdcdc; }
.params .live { color: #333; }
.params .live .box { border-color: #999; }
.params .live .ro { background: #d4d4d4; }
.params .live .or { background: #ff9f00; }
.params .sel svg, .params .i14 { color: #bcbcbc; }
.params .chk { border-color: #bdbdbd; background: #ebebeb; margin-top: 1px; color: #9fd0ea; }
.first { padding-top: 9px; height: 48px; }
.second { height: 44px; border-bottom: 1px solid #cdcdcd; }
.first.s { height: 49px; }
.first + .second.s { height: 43px; }
.second.s.z { border: 0; }
.first.s.z { padding-top: 8px; height: 48px; }
.inl { display: flex; gap: 4px; align-items: center; }
.inl.far { gap: 12px; }
.ind { padding-left: 8px; }
.bwd { display: flex; padding-top: 1px; }
.bwd .chk { margin-top: 1px; }
.sw { margin-left: 32px; } .sw label { padding-left: 2px; }
.sv { margin-left: 10px; opacity: .5; }
.acqh { display: flex; justify-content: space-between; align-items: flex-end; height: 31px; padding: 0 1px 7px 1px; width: 160px; }
.acqh svg { width: 14px; height: 11px; margin-bottom: -4px; }
.list { display: flex; width: 160px; height: 265px; border: 1px solid #c4c4c4; background: #ededed; color: #999; }
.list ul { width: 143px; height: 263px; overflow: hidden; margin: 0; padding: 0; list-style: none; border-right: 1px solid #c4c4c4; }
.list li { height: 14px; line-height: 15px; padding: 0 0 0 4px; }
.list .on { background: #a4cfe3; }
.sb { display: flex; flex-direction: column; align-items: center; width: 15px; padding: 5px 0 4px; }
.sb svg { width: 8px; height: 7px; }
.sb i { width: 11px; height: 118px; margin-top: 4px; border: 1px solid #c0c0c0; border-radius: 4px; background: #dadada; }
.sb .dn { margin-top: auto; }
.sright { flex: 1; padding: 10px 0 0 11px; }
.rtop { display: flex; height: 84px; padding-right: 11px; }
.rl { width: 271px; }
.rr { display: flex; } .r2 { margin-top: 7px; }
.g13 { margin-left: 13px; } .g7 { margin-left: 7px; } .g8 { margin-left: 8px; }
.dis { color: #aaa; } .dis .box { border-color: #c6c6c6; background: #ebebeb; }
.rh { flex: 1; padding-left: 33px; }
.back { display: flex; justify-content: flex-end; gap: 6px; color: #999; height: 32px; padding-top: 1px; font-size: 11px; letter-spacing: -.2px; }
.vis { display: grid; grid-template-columns: 117px auto; grid-template-rows: 22px 22px; }
.vr { display: flex; height: 17px; align-items: center; }
.vr span { width: 28px; } .vr .eye { width: 16px; height: 11px; margin-right: 8px; }
.vr i { width: 17px; height: 17px; margin-left: 9px; }
.navy { background: #2a2850; } .brown { background: #502828; }
.all { grid-area: 1 / 2 / 3 / 3; line-height: 17px; }
.all svg { width: 14px; height: 15px; margin-top: -1px; }
.rtools { display: flex; align-items: center; height: 15px; margin-left: 274px; }
.rtools .p9 + .p9 { margin-left: 13px; }
.m11 { margin-left: 11px; } .m6 { margin-left: 6px; } .m14 { margin-left: 14px; } .m19 { margin-left: 19px; } .m13 { margin-left: 13px; } .m33 { margin-left: 33px; }
.rtools .m6 { margin-left: 7px; }
#linegraph { margin: 1px 0 0 -12px; }

/* monitor window */
.monitor { left: 1331px; top: 266px; width: 569px; height: 720px; background: #e1e1e1; }
.monitor .bar { padding-right: 18px; color: #000; }
.monitor .title { letter-spacing: -.36px; }
.mtop { display: flex; height: 112px; padding: 8px 0 0 10px; }
.mc { width: 130px; }
.mc .box { background: #fafafa; } .mc .box.ro { background: #d0d0d0; }
.dec { display: flex; gap: 4px; justify-content: flex-end; width: 110px; height: 23px; margin: 9px 0; line-height: 14px; }
.dec.fw { justify-content: flex-start; gap: 5px; height: 22px; }
.ftog { display: flex; align-items: center; justify-content: flex-end; gap: 6px; width: 28px; height: 16px; background: #858585; border-radius: 2px; padding: 1px; }
.ftog svg { width: 6px; height: 8px; } .ftog i { width: 7px; height: 14px; background: #eaeaea; border-radius: 2px; }
.pal { width: 300px; border-left: 1px solid #cdcdcd; margin: 3px 0 0 -2px; padding-left: 17px; height: 101px; }
.pal .fld { margin-top: -3px; }
.vals { display: flex; gap: 0; align-items: center; margin-top: 7px; height: 17px; }
.vals .box + .box { margin-left: 4px; }
.rng { width: 15px; height: 16px; background: #9b9b9b; border-radius: 3px; margin-left: 6px; }
.rng .hx { width: 15px; height: 15px; }
#slider { margin-left: -17px; }
svg text { font: 11px "DejaVu Sans Condensed", "DejaVu Sans", sans-serif; font-stretch: condensed; fill: #333; }
svg text.pdftext { font: bold 12.5px "Noto Sans", sans-serif; fill: #fff; text-anchor: middle; letter-spacing: 0; }
```
FILE: app.js
```js
const $ = id => document.getElementById(id);
const f = n => Math.round(n * 10) / 10;

/* desktop shortcuts, keyed by row and column */
const pics = {
  '1,0': ['cloud', 'Cloudpaging\nPlayer', 1], '1,1': ['sheet', 'update_iss...'],
  '2,0': ['firefox', 'Firefox', 1], '2,1': ['pdf', 'BF02570355'],
  '3,0': ['chrome', '', 1], '3,1': ['cal', ''],
  '7,0': ['chrome', '\nLog'], '8,0': ['teams', 'Microsoft\nTeams', 1],
  '8,1': ['folder', 'Sweeper\n2023-03-...'], '9,0': ['pdf', ''], '9,1': ['doc', '']
};
let cells = '';
for (let r = 0; r < 10; r++) for (let c = 0; c < 11; c++) {
  let p = pics[r + ',' + c];
  const hidden = r === 0 || (c > 4 && r < 5) || (c < 6 && r > 3 && r < 8);
  const name = r === 9 || r === 3 ? '' : c === 2 ? 'm13_199_5...' : c === 3 && r < 4 ? 'm13_199_5_...' : 'Sweeper00...';
  if (!p && c > 1 && !hidden) p = ['notepad', name];
  if (!p) { cells += '<div></div>'; continue; }
  cells += `<div class="ico"><div class="pic"><svg class="main"><use href="#${p[0]}"/></svg>${p[2] ? '<svg class="cut"><use href="#shortcut"/></svg>' : ''}</div><span>${p[1]}</span></div>`;
}
$('icons').innerHTML = cells;

/* signal chart */
const in1 = [264,540,275,403,286,560,292,462,296,520,305,400,316,568,323,440,327,508,335,412,341,645,351,415,357,497,365,428,371,645,382,398,389,513,395,440,401,630,408,395,413,392,418,550,423,458,430,575,437,382,442,395,447,552,452,460,458,460,461,552,467,378,476,572,484,445,489,510,497,376,506,585,514,418,520,527,527,388,536,600,545,395,552,543,557,408,563,682,574,377,580,538,587,425,593,665,603,367,611,528,617,435,623,600,632,355,638,575,648,440,653,583,661,348,670,598,678,420,684,552,691,362,698,625,706,400,710,395,715,553,719,372,728,703,738,368,745,553,749,395,757,712,765,362,769,358,778,563,782,410,788,690,795,348,803,572,810,425,818,612,824,340,832,600,841,425,846,540,854,338,862,622,871,398,876,605,884,347,890,643,901,380,907,560,914,365,921,652,928,362,936,570,943,440,949,752,960,348,966,577,973,408,980,745,989,330,995,590,1002,420,1010,640];
const in2 = [264,1140,274,1355,290,950,302,1390,318,993,329,1405,342,1002,356,1380,370,978,385,1380,398,942,415,1335,427,930,438,1325,452,942,465,1350,481,948,494,1400,510,1000,523,1408,536,1000,548,1392,560,980,577,1385,590,935,605,1335,619,937,635,1325,647,937,657,1362,676,958,686,1400,701,997,715,1393,728,993,742,1395,756,972,771,1368,782,937,797,1343,810,955,824,1345,838,943,851,1368,868,970,880,1395,893,990,906,1378,920,985,935,1392,947,967,963,1353,976,947,990,1345,1004,952,1015,1350,1031,947,1044,1368,1059,980,1072,1388,1086,990,1100,1383,1114,980,1128,1365,1139,962,1154,1357,1169,952,1183,1340,1196,952,1210,1353,1225,958,1237,1380,1250,978,1265,1380,1278,993,1291,1385,1306,978,1320,1350,1334,958,1348,1360,1362,960,1374,1345,1388,947,1394,1240,1397,1130,1400,1380,1405,1090,1408,1250,1411,1000,1414,1130,1417,965,1419,1100,1421,1200];
/* samples are stored at three units per pixel; each swing runs steep first and flattens near its end */
function trace(a) {
  let d = '';
  for (let i = 0; i < a.length; i += 2) {
    const x = a[i] / 3 - 6, y = a[i + 1] / 3 - 100;
    if (i && a[i] - a[i - 2] > 8) {
      const px = a[i - 2] / 3 - 6, py = a[i - 1] / 3 - 100, w = x - px, h = y - py;
      const rising = h < 0;
      d += rising ? `L${f(px + w * .3)} ${f(py + h * .2)}L${f(px + w * .62)} ${f(py + h * .58)}` : `L${f(px + w * .2)} ${f(py + h * .38)}L${f(px + w * .55)} ${f(py + h * .74)}`;
    }
    d += (i ? 'L' : 'M') + f(x) + ' ' + f(y);
  }
  return d;
}
(function () {
  let s = '<path d="M81 8h387v172H81z M81 198h387v172H81z" fill="#000"/><path d="M81 8.500h387M81.500 8v172M81 198.500h387M81.500 198v172" stroke="#666" fill="none"/><path d="M81 180.500h388v-172M81 370.500h388v-172" stroke="#f4f4f4" fill="none"/>';
  for (let i = 0; i <= 30; i++) {
    const y = Math.round(9 + i * 28.4 / 5) + .5, M = i % 5 === 0;
    if (i && i < 30) s += `<path d="M82 ${y}h386" stroke="${M ? '#707070' : '#2c2c2c'}"/>`;
    if (M) s += `<path d="M75 ${y}h5" stroke="#222"/><text x="72" y="${y + 4}" text-anchor="end">${50 - i}m</text>`;
  }
  for (let i = 0; i < 10; i++) {
    const y = Math.round(199 + i * 18.9) + .5;
    if (i && i < 9) s += `<path d="M82 ${y}h386" stroke="#6c6c6c"/>`;
    s += `<path d="M75 ${y}h5" stroke="#222"/><text x="72" y="${y + 4}" text-anchor="end">-${325 + i * 25}m</text>`;
  }
  s += `<g shape-rendering="crispEdges" fill="none"><path d="${trace(in1)}" stroke="#5dffb0"/><path d="${trace(in2)}" stroke="#ff9d00"/></g>`;
  s += '<text transform="translate(47 96) rotate(-90)" text-anchor="middle">Input 1 (V)</text><text transform="translate(37 286) rotate(-90)" text-anchor="middle">Input 2 (V)</text>';
  $('chart').innerHTML = s;
})();

/* line graph: local origin is (1218,253) */
(function () {
  let s = '<path d="M67 8h380v256H67z" fill="#000"/>';
  for (let x = 74; x < 447; x += 7) s += `<path d="M${x}.500 9v255" stroke="#161616"/>`;
  for (let i = 0; i <= 45; i++) {
    const y = Math.round(9 + i * 5.64) + .5;
    if (i < 45) s += `<path d="M68 ${y}h379" stroke="${i % 5 ? '#121212' : '#262626'}"/>`;
    if (i % 5 === 0) s += `<path d="M60 ${y}h5" stroke="#222"/><text x="57" y="${y + 4}" text-anchor="end">${i === 45 ? 0 : 45 - i + 'm'}</text>`;
  }
  s += '<path d="M67 8.500h380M67.500 8v256" stroke="#666"/><path d="M67.500 9v255M68 37.500h120" stroke="#ffc525" stroke-dasharray="4 3"/>';
  s += '<path d="M68 38v-4l4-3 4-2 4 2h4l3 2 4-1 1 3 4 1v-3l3 3v4" fill="none" stroke="#fff"/>';
  s += '<path d="M67.500 266v5" stroke="#222"/><text x="67" y="282" text-anchor="middle">-200u</text>';
  $('linegraph').innerHTML = s;
})();

/* palette slider: local origin is (1600,364) */
(function () {
  let s = '<path d="M22 10.500h254v6H22z" fill="#4bb0e5"/>';
  for (const x of [22, 265]) s += `<path d="M${x} 4h11v9l-5.500 6-5.500-6z" fill="url(#gKnob)"/>`;
  for (let v = 30; v < 41.800; v += .5) {
    const x = Math.round(27 + (v - 29.873) * 20.430) + .5;
    s += `<path d="M${x} 20v${v % 5 === 0 ? 5 : 3}" stroke="#111"/>`;
  }
  s += '<path d="M27.500 20v5M270.500 20v5" stroke="#111"/>';
  for (const [x, t] of [[27, '29.87m'], [132, '35m'], [233, '40m'], [269, '41.76m']]) s += `<text x="${x}" y="36.500" text-anchor="middle">${t}</text>`;
  $('slider').innerHTML = s;
})();

/* heat map: local origin is (1331,410) */
(function () {
  let seed = 7;
  const rnd = () => (seed = (seed * 16807) % 2147483647) / 2147483647;
  const X = 1331, rows = 50, top = 17, rh = 482.500 / rows;
  const mix = (a, b, t) => a.map((v, i) => Math.round(v + (b[i] - v) * t));
  const stops = [[0, [0, 0, 0]], [.25, [110, 0, 0]], [.5, [230, 0, 0]], [.7, [255, 100, 0]], [.85, [255, 165, 0]], [1, [255, 225, 0]]];
  const col = v => {
    v = Math.max(0, Math.min(1, v));
    for (let i = 1; i < stops.length; i++) if (v <= stops[i][0]) {
      const [a, ca] = stops[i - 1], [b, cb] = stops[i];
      return 'rgb(' + mix(ca, cb, (v - a) / (b - a)) + ')';
    }
  };
  /* bands as [from, to, level, jitter, cell width] */
  const bands = [
    [1417, 1434, .9, .08, 6], [1434, 1441, .79, .08, 3], [1441, 1449, .4, .2, 2], [1449, 1457, .06, .04, 4], [1457, 1536, .07, .035, 8], [1536, 1543, .13, .16, 2],
    [1543, 1549, .65, .14, 2], [1549, 1578, .9, .08, 8], [1578, 1585, .81, .08, 3], [1585, 1593, .42, .2, 2], [1593, 1673, .065, .035, 8], [1673, 1679, .09, .1, 2],
    [1679, 1686, .62, .16, 2], [1686, 1714, .91, .08, 8], [1714, 1722, .85, .08, 3], [1722, 1730, .45, .22, 2], [1730, 1815, .065, .035, 8],
    [1815, 1823, .38, .2, 2], [1823, 1829, .8, .08, 3], [1829, 1850, .9, .08, 8], [1850, 1857, .81, .08, 3], [1857, 1861, .44, .2, 2], [1861, 1866, .22, .2, 2], [1866, 1869, .01, .01, 3]
  ];
  let s = '<path d="M86 15h452v485H86z" fill="#1a0000"/><g shape-rendering="crispEdges">';
  for (let r = 0; r < rows; r++) {
    const y0 = Math.round(top + r * rh), y1 = Math.round(top + (r + 1) * rh);
    const lift = (rnd() - .5) * .08;
    let drift = 0;
    for (const [a, b, lv, j, w] of bands) for (let x = a; x < b; x += w) {
      drift = drift * .6 + (rnd() - .5) * .85;
      let v = lv + drift * j * 1.400 + lift * (lv > .5 ? 1 : lv < .1 ? .35 : .8);
      const ww = Math.min(w, b - x);
      if (r === 49 && x > 1434 && x < 1471) v = x < 1455 ? .86 : x < 1464 ? .62 : .3;
      if (r === 46 && x > 1434 && x < 1458) v = x < 1449 ? .76 : .4;
      if ((r === 47 || r === 48 || r === 45 || r === 44) && x > 1440 && x < 1449) v = .6 + rnd() * .1;
      s += `<path d="M${x - X} ${y0}h${ww}v${y1 - y0}h-${ww}z" fill="${col(v)}"/>`;
    }
  }
  s += '</g><path d="M86 15.500h453M86.500 15v485" stroke="#6a6a6a"/><path d="M87 16.500h452" stroke="#000"/>';
  const ys = [['50.05', 16.500]];
  for (let v = 48; v > 0; v -= 2) ys.push([v, 36.500 + (48 - v) / 2 * 19.280]);
  ys.push(['50m', 499.500]);
  for (const [t, y] of ys) s += `<path d="M80 ${Math.round(y - .5) + .5}h5" stroke="#222"/><text x="77" y="${f(y + 4)}" text-anchor="end">${t}</text>`;
  ['-200u', '-16.941z', '200u', '400u', '600u', '800u', '1m'].forEach((t, i) => {
    const x = Math.round(86 + i * 75.200) + .5;
    s += `<path d="M${x} 502v5" stroke="#222"/><text x="${x}" y="518" text-anchor="middle">${t}</text>`;
  });
  s += '<text x="311" y="533" text-anchor="middle">Output 2 (V)</text><text transform="translate(43 260) rotate(-90)" text-anchor="middle">Output 3 (V)</text>';
  $('heat').innerHTML = s;
})();
```
